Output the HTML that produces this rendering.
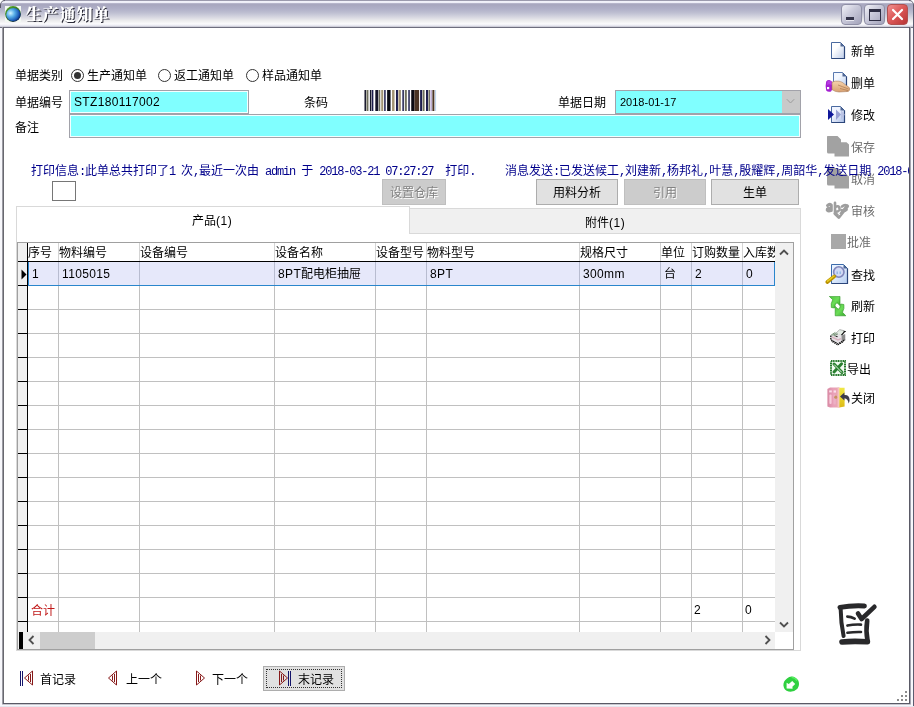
<!DOCTYPE html>
<html lang="zh-CN"><head><meta charset="utf-8"><title>生产通知单</title>
<style>
*{box-sizing:border-box;margin:0;padding:0}
html,body{width:914px;height:707px;overflow:hidden;background:#fff}
body{position:relative;font-family:"Liberation Sans","Noto Sans CJK SC",sans-serif;font-size:12px;line-height:12px;color:#000}
.a{position:absolute}
.t{position:absolute;white-space:nowrap;font-size:12px;line-height:14px;height:14px}
.m{font-family:"Liberation Mono","Noto Sans CJK SC",monospace;font-size:12px;letter-spacing:-1.2px}
.blue{color:#00008b}
.inp{position:absolute;border:1px solid #a2a2aa;background:#80ffff;box-shadow:inset 0 0 0 1px #f4ffff}
.btn{position:absolute;border:1px solid #adadad;background:#e1e1e1;text-align:center;font-size:12px}
.btn.dis{background:#cccccc;border-color:#bfbfbf;color:#838383;text-shadow:1px 1px 0 #fff}
.vl{position:absolute;width:1px;background:#c0c0c0}
.hl{position:absolute;height:1px;background:#c0c0c0}
.tb{position:absolute;white-space:nowrap;font-size:12px;line-height:14px;height:14px}
.tb.dis{color:#6d6d6d}
</style></head>
<body>
<div id="root" style="position:absolute;left:0;top:0;width:914px;height:707px;will-change:transform">
<div class="a" id="frame" style="left:0;top:0;width:914px;height:707px;background:#f7f7fb;border-radius:5px 5px 0 0;overflow:hidden">
<div class="a" id="title" style="left:0;top:0;width:914px;height:28px;background:linear-gradient(to bottom,#9b9aad 0px,#9b9aad 1px,#f2f2fa 1px,#ececf6 3px,#c4c3d6 3px,#a8a7bf 4px,#a8a7bf 5px,#b0b0c8 9px,#bfc0d2 13px,#d6d6e0 17px,#eeeeee 21px,#fbfbfd 24px,#e8e8f0 25.5px,#c0c0cc 27px,#6e6e7e 27px,#6e6e7e 28px)"></div>
<div class="a" style="left:2px;top:27px;width:1px;height:677px;background:#9c9ca4"></div>
<div class="a" style="left:3px;top:27px;width:1px;height:677px;background:#68686f"></div>
<div class="a" style="left:909px;top:27px;width:1px;height:677px;background:#5a5a66"></div>
<div class="a" style="left:910px;top:27px;width:1px;height:677px;background:#a4a4b0"></div>
<div class="a" style="left:913px;top:5px;width:1px;height:702px;background:#5c5c70"></div>
<svg class="a" style="left:0;top:0" width="914" height="8" viewBox="0 0 914 8"><path d="M0.5 8 V5 Q0.5 0.5 5 0.5" fill="none" stroke="#5a5a68" stroke-width="1"/><path d="M909 0.5 Q913.5 0.5 913.5 5" fill="none" stroke="#5a5a68" stroke-width="1"/></svg>
<div class="a" style="left:3px;top:703px;width:907px;height:1px;background:#5a5a66"></div>
<div class="a" style="left:0;top:706px;width:914px;height:1px;background:#e6e6ee"></div>
<div class="a" style="left:2px;top:704px;width:909px;height:1px;background:#c8c8d0"></div>
<div class="a" id="client" style="left:4px;top:28px;width:905px;height:675px;background:#fff"></div>
</div>
<svg class="a" style="left:5px;top:6px" width="16" height="16" viewBox="0 0 16 16"><defs><radialGradient id="gl" cx="30%" cy="38%" r="72%"><stop offset="0" stop-color="#d2f4ff"/><stop offset="0.4" stop-color="#58aee8"/><stop offset="0.8" stop-color="#1c5cb8"/><stop offset="1" stop-color="#0c2a6a"/></radialGradient><linearGradient id="ge" x1="0" y1="0" x2="0.6" y2="1"><stop offset="0" stop-color="#5cae22"/><stop offset="0.6" stop-color="#2c6c28"/><stop offset="1" stop-color="#10283c"/></linearGradient></defs><rect width="16" height="16" fill="#f2f8f2"/><circle cx="8" cy="8" r="7.9" fill="url(#ge)"/><ellipse cx="8.4" cy="8.7" rx="7.2" ry="6.6" fill="url(#gl)"/></svg>
<div class="a" style="left:26px;top:5px;font-family:'Liberation Serif','Noto Serif CJK SC',serif;font-weight:900;font-size:16px;letter-spacing:0.8px;line-height:20px;color:#fff;text-shadow:1px 1px 0 #2c2c38;white-space:nowrap">生产通知单</div>
<div class="a" style="left:841px;top:4px;width:21px;height:21px;border-radius:4px;border:1px solid #8f8fa6;background:linear-gradient(135deg,#f2f2f8 0%,#c9c9da 45%,#a3a3ba 100%)"><div class="a" style="left:4px;top:12px;width:8px;height:3px;background:#34344a;box-shadow:0 1px 0 #e8e8f0"></div></div>
<div class="a" style="left:864px;top:4px;width:21px;height:21px;border-radius:4px;border:1px solid #8f8fa6;background:linear-gradient(135deg,#f2f2f8 0%,#c9c9da 45%,#a3a3ba 100%)"><div class="a" style="left:4px;top:4px;width:12px;height:12px;border:1px solid #2e2e44;border-top-width:3px"></div></div>
<div class="a" style="left:887px;top:4px;width:21px;height:21px;border-radius:4px;border:1px solid #b05050;background:linear-gradient(135deg,#f09090 0%,#dd5a5a 45%,#b83434 100%)"><svg class="a" style="left:3px;top:3px" width="13" height="13" viewBox="0 0 13 13"><path d="M2 2 L11 11 M11 2 L2 11" stroke="#fff" stroke-width="2.2" stroke-linecap="round"/></svg></div>
<div class="t " style="left:15px;top:69px;">单据类别</div>
<div class="t " style="left:15px;top:96px;">单据编号</div>
<div class="t " style="left:15px;top:121px;">备注</div>
<div class="a" style="left:71px;top:69px;width:13px;height:13px;border:1px solid #333;border-radius:50%;background:#fff"><div class="a" style="left:2px;top:2px;width:7px;height:7px;border-radius:50%;background:#333"></div></div>
<div class="t " style="left:87px;top:69px;">生产通知单</div>
<div class="a" style="left:158px;top:69px;width:13px;height:13px;border:1px solid #333;border-radius:50%;background:#fff"></div>
<div class="t " style="left:174px;top:69px;">返工通知单</div>
<div class="a" style="left:246px;top:69px;width:13px;height:13px;border:1px solid #333;border-radius:50%;background:#fff"></div>
<div class="t " style="left:262px;top:69px;">样品通知单</div>
<div class="inp" style="left:69px;top:90px;width:180px;height:24px"></div>
<div class="t " style="left:74px;top:95px;letter-spacing:0.36px">STZ180117002</div>
<div class="t " style="left:304px;top:96px;">条码</div>
<svg class="a" style="left:364px;top:90px" width="73" height="21" viewBox="0 0 73 21"><rect x="0.49" y="0" width="1.48" height="21" fill="#15152a"/><rect x="2.46" y="0" width="1.97" height="21" fill="#6e6e5c"/><rect x="5.90" y="0" width="1.48" height="21" fill="#15152a"/><rect x="7.87" y="0" width="1.48" height="21" fill="#1c1c4c"/><rect x="11.32" y="0" width="2.95" height="21" fill="#15152a"/><rect x="14.76" y="0" width="1.48" height="21" fill="#6e6e5c"/><rect x="17.22" y="0" width="1.97" height="21" fill="#a39474"/><rect x="20.18" y="0" width="1.48" height="21" fill="#1c1c4c"/><rect x="23.13" y="0" width="3.44" height="21" fill="#0a0a12"/><rect x="28.05" y="0" width="2.46" height="21" fill="#a39474"/><rect x="31.99" y="0" width="1.97" height="21" fill="#1c1c4c"/><rect x="34.45" y="0" width="2.46" height="21" fill="#a39474"/><rect x="38.38" y="0" width="1.48" height="21" fill="#1c1c4c"/><rect x="40.84" y="0" width="1.97" height="21" fill="#6e6e5c"/><rect x="44.29" y="0" width="1.48" height="21" fill="#1c1c4c"/><rect x="47.24" y="0" width="3.15" height="21" fill="#0a0a12"/><rect x="50.39" y="0" width="4.72" height="21" fill="#4a3424"/><rect x="56.10" y="0" width="1.97" height="21" fill="#1c1c4c"/><rect x="58.56" y="0" width="1.97" height="21" fill="#6e6e5c"/><rect x="62.01" y="0" width="1.97" height="21" fill="#1c1c4c"/><rect x="64.47" y="0" width="1.48" height="21" fill="#6e6e5c"/><rect x="66.44" y="0" width="1.48" height="21" fill="#b8a8d0"/><rect x="68.40" y="0" width="1.97" height="21" fill="#4a3424"/><rect x="71.36" y="0" width="0.69" height="21" fill="#9cc0e8"/></svg>
<div class="t " style="left:558px;top:96px;">单据日期</div>
<div class="inp" style="left:615px;top:90px;width:186px;height:24px;box-shadow:none"><div class="a" style="right:0;top:0;width:18px;height:22px;background:#c9c9c9"><svg class="a" style="left:4px;top:7px" width="9" height="7" viewBox="0 0 9 7"><path d="M0.8 1.2 L4.5 5 L8.2 1.2" fill="none" stroke="#9c9c9c" stroke-width="1"/></svg></div></div>
<div class="t " style="left:620px;top:95px;font-size:11px">2018-01-17</div>
<div class="inp" style="left:69px;top:114px;width:732px;height:24px"></div>
<div class="t blue" style="left:31px;top:164px;">打印信息<span class="m">:</span>此单总共打印了<span class="m">1&nbsp;</span>次<span class="m">,</span>最近一次由<span class="m">&nbsp;admin&nbsp;</span>于<span class="m">&nbsp;2018-03-21&nbsp;07:27:27&nbsp;&nbsp;</span>打印<span class="m">.</span></div>
<div class="a" style="left:52px;top:181px;width:24px;height:20px;border:1px solid #767676;background:#fff"></div>
<div class="btn dis" style="left:382px;top:179px;width:64px;height:26px;line-height:27px">设置仓库</div>
<div class="btn" style="left:536px;top:179px;width:82px;height:26px;line-height:27px">用料分析</div>
<div class="btn dis" style="left:624px;top:179px;width:82px;height:26px;line-height:27px">引用</div>
<div class="btn" style="left:711px;top:179px;width:88px;height:26px;line-height:27px">生单</div>
<div class="a" style="left:409px;top:208px;width:392px;height:26px;background:#f0f0f0;border:1px solid #d9d9d9"></div>
<div class="a" style="left:16px;top:233px;width:785px;height:418px;background:#fff;border:1px solid #d9d9d9"></div>
<div class="a" style="left:16px;top:206px;width:394px;height:28px;background:#fff;border:1px solid #d9d9d9;border-bottom:none"></div>
<div class="t " style="left:192px;top:214px;">产品<span style="letter-spacing:0.5px">(1)</span></div>
<div class="t " style="left:585px;top:216px;">附件<span style="letter-spacing:0.5px">(1)</span></div>
<div class="a" id="grid" style="left:17px;top:242px;width:777px;height:408px;border:1px solid #a0a0a0;background:#fff;overflow:hidden"></div>
<div class="a" style="left:18px;top:243px;width:9px;height:389px;background:#f0f0f0"></div>
<div class="vl" style="left:58px;top:243px;height:18px;background:#d4d4d4"></div><div class="vl" style="left:58px;top:262px;height:370px"></div>
<div class="vl" style="left:139px;top:243px;height:18px;background:#d4d4d4"></div><div class="vl" style="left:139px;top:262px;height:370px"></div>
<div class="vl" style="left:274px;top:243px;height:18px;background:#d4d4d4"></div><div class="vl" style="left:274px;top:262px;height:370px"></div>
<div class="vl" style="left:375px;top:243px;height:18px;background:#d4d4d4"></div><div class="vl" style="left:375px;top:262px;height:370px"></div>
<div class="vl" style="left:426px;top:243px;height:18px;background:#d4d4d4"></div><div class="vl" style="left:426px;top:262px;height:370px"></div>
<div class="vl" style="left:579px;top:243px;height:18px;background:#d4d4d4"></div><div class="vl" style="left:579px;top:262px;height:370px"></div>
<div class="vl" style="left:660px;top:243px;height:18px;background:#d4d4d4"></div><div class="vl" style="left:660px;top:262px;height:370px"></div>
<div class="vl" style="left:691px;top:243px;height:18px;background:#d4d4d4"></div><div class="vl" style="left:691px;top:262px;height:370px"></div>
<div class="vl" style="left:742px;top:243px;height:18px;background:#d4d4d4"></div><div class="vl" style="left:742px;top:262px;height:370px"></div>
<div class="hl" style="left:28px;top:285px;width:747px"></div><div class="a" style="left:18px;top:285px;width:10px;height:1px;background:#000"></div>
<div class="hl" style="left:28px;top:309px;width:747px"></div><div class="a" style="left:18px;top:309px;width:10px;height:1px;background:#000"></div>
<div class="hl" style="left:28px;top:333px;width:747px"></div><div class="a" style="left:18px;top:333px;width:10px;height:1px;background:#000"></div>
<div class="hl" style="left:28px;top:357px;width:747px"></div><div class="a" style="left:18px;top:357px;width:10px;height:1px;background:#000"></div>
<div class="hl" style="left:28px;top:381px;width:747px"></div><div class="a" style="left:18px;top:381px;width:10px;height:1px;background:#000"></div>
<div class="hl" style="left:28px;top:405px;width:747px"></div><div class="a" style="left:18px;top:405px;width:10px;height:1px;background:#000"></div>
<div class="hl" style="left:28px;top:429px;width:747px"></div><div class="a" style="left:18px;top:429px;width:10px;height:1px;background:#000"></div>
<div class="hl" style="left:28px;top:453px;width:747px"></div><div class="a" style="left:18px;top:453px;width:10px;height:1px;background:#000"></div>
<div class="hl" style="left:28px;top:477px;width:747px"></div><div class="a" style="left:18px;top:477px;width:10px;height:1px;background:#000"></div>
<div class="hl" style="left:28px;top:501px;width:747px"></div><div class="a" style="left:18px;top:501px;width:10px;height:1px;background:#000"></div>
<div class="hl" style="left:28px;top:525px;width:747px"></div><div class="a" style="left:18px;top:525px;width:10px;height:1px;background:#000"></div>
<div class="hl" style="left:28px;top:549px;width:747px"></div><div class="a" style="left:18px;top:549px;width:10px;height:1px;background:#000"></div>
<div class="hl" style="left:28px;top:573px;width:747px"></div><div class="a" style="left:18px;top:573px;width:10px;height:1px;background:#000"></div>
<div class="hl" style="left:28px;top:597px;width:747px"></div><div class="a" style="left:18px;top:597px;width:10px;height:1px;background:#000"></div>
<div class="hl" style="left:28px;top:621px;width:747px"></div><div class="a" style="left:18px;top:621px;width:10px;height:1px;background:#000"></div>
<div class="a" style="left:28px;top:262px;width:747px;height:24px;background:#e6e8fa;border:1px solid #2a86cc;border-top:none"></div>
<div class="vl" style="left:58px;top:262px;height:23px;background:#b8bcd0"></div><div class="vl" style="left:139px;top:262px;height:23px;background:#b8bcd0"></div><div class="vl" style="left:274px;top:262px;height:23px;background:#b8bcd0"></div><div class="vl" style="left:375px;top:262px;height:23px;background:#b8bcd0"></div><div class="vl" style="left:426px;top:262px;height:23px;background:#b8bcd0"></div><div class="vl" style="left:579px;top:262px;height:23px;background:#b8bcd0"></div><div class="vl" style="left:660px;top:262px;height:23px;background:#b8bcd0"></div><div class="vl" style="left:691px;top:262px;height:23px;background:#b8bcd0"></div><div class="vl" style="left:742px;top:262px;height:23px;background:#b8bcd0"></div>
<div class="a" style="left:27px;top:243px;width:1px;height:389px;background:#000"></div>
<div class="a" style="left:18px;top:261px;width:757px;height:1px;background:#000"></div>
<svg class="a" style="left:21px;top:269px" width="6" height="11" viewBox="0 0 6 11"><path d="M0.5 0.5 L5.5 5.5 L0.5 10.5 Z" fill="#000"/></svg>
<div class="t " style="left:28px;top:246px;">序号</div>
<div class="t " style="left:59px;top:246px;">物料编号</div>
<div class="t " style="left:140px;top:246px;">设备编号</div>
<div class="t " style="left:275px;top:246px;">设备名称</div>
<div class="t " style="left:376px;top:246px;">设备型号</div>
<div class="t " style="left:427px;top:246px;">物料型号</div>
<div class="t " style="left:580px;top:246px;">规格尺寸</div>
<div class="t " style="left:661px;top:246px;">单位</div>
<div class="t " style="left:692px;top:246px;">订购数量</div>
<div class="t" style="left:743px;top:246px;width:32px;overflow:hidden">入库数量</div>
<div class="t " style="left:32px;top:267px;letter-spacing:0.35px">1</div>
<div class="t " style="left:62px;top:267px;letter-spacing:0.35px">1105015</div>
<div class="t " style="left:278px;top:267px;"><span style="letter-spacing:0.35px">8PT</span>配电柜抽屉</div>
<div class="t " style="left:430px;top:267px;letter-spacing:0.35px">8PT</div>
<div class="t " style="left:583px;top:267px;letter-spacing:0.35px">300mm</div>
<div class="t " style="left:664px;top:267px;letter-spacing:0.35px">台</div>
<div class="t " style="left:695px;top:267px;letter-spacing:0.35px">2</div>
<div class="t " style="left:746px;top:267px;letter-spacing:0.35px">0</div>
<div class="t " style="left:31px;top:604px;color:#c01818">合计</div>
<div class="t " style="left:694px;top:603px;">2</div>
<div class="t " style="left:745px;top:603px;">0</div>
<div class="a" style="left:775px;top:243px;width:18px;height:389px;background:#f0f0f0"></div>
<div class="a" style="left:18px;top:632px;width:757px;height:17px;background:#f0f0f0"></div>
<div class="a" style="left:19px;top:632px;width:4px;height:17px;background:#000"></div>
<div class="a" style="left:40px;top:632px;width:55px;height:17px;background:#cdcdcd"></div>
<svg class="a" style="left:778.5px;top:248px" width="10" height="8" viewBox="0 0 10 8"><path d="M1 6.5 L5 2.5 L9 6.5" fill="none" stroke="#505050" stroke-width="1.8"/></svg>
<svg class="a" style="left:778.5px;top:621px" width="10" height="8" viewBox="0 0 10 8"><path d="M1 1.5 L5 5.5 L9 1.5" fill="none" stroke="#505050" stroke-width="1.8"/></svg>
<svg class="a" style="left:27px;top:635px" width="8" height="10" viewBox="0 0 8 10"><path d="M6.5 1 L2.5 5 L6.5 9" fill="none" stroke="#505050" stroke-width="1.8"/></svg>
<svg class="a" style="left:764px;top:635px" width="8" height="10" viewBox="0 0 8 10"><path d="M1.5 1 L5.5 5 L1.5 9" fill="none" stroke="#505050" stroke-width="1.8"/></svg>
<svg class="a" style="left:20px;top:670px" width="14" height="16" viewBox="0 0 14 16"><path d="M0.5 1 V16" stroke="#14146a" stroke-width="1"/><path d="M2.5 1 V16" stroke="#14146a" stroke-width="1"/><path d="M12.5 1 L4.5 8 L12.5 15 Z M10.5 4 V12 M8.5 5.5 V10.5" fill="none" stroke="#861818" stroke-width="1"/></svg>
<div class="t " style="left:40px;top:673px;">首记录</div>
<svg class="a" style="left:108px;top:670px" width="14" height="16" viewBox="0 0 14 16"><path d="M8.5 1 L0.5 8 L8.5 15 Z M6.5 4 V12 M4.5 5.5 V10.5" fill="none" stroke="#861818" stroke-width="1"/></svg>
<div class="t " style="left:126px;top:673px;">上一个</div>
<svg class="a" style="left:196px;top:670px" width="14" height="16" viewBox="0 0 14 16"><path d="M0.5 1 L8.5 8 L0.5 15 Z M2.5 4 V12 M4.5 5.5 V10.5" fill="none" stroke="#861818" stroke-width="1"/></svg>
<div class="t " style="left:212px;top:673px;">下一个</div>
<div class="a" style="left:263px;top:666px;width:82px;height:25px;background:#e1e1e1;border:1px solid #adadad"><div class="a" style="left:2px;top:2px;width:76px;height:19px;border:1px dotted #333"></div></div>
<svg class="a" style="left:279px;top:670px" width="14" height="16" viewBox="0 0 14 16"><path d="M0.5 1 L8.5 8 L0.5 15 Z M2.5 4 V12 M4.5 5.5 V10.5" fill="none" stroke="#861818" stroke-width="1"/><path d="M9.5 1 V16" stroke="#14146a" stroke-width="1"/><path d="M11.5 1 V16" stroke="#14146a" stroke-width="1"/></svg>
<div class="t " style="left:298px;top:673px;">末记录</div>
<svg class="a" style="left:829px;top:40px" width="20" height="22" viewBox="0 0 20 22"><defs><linearGradient id="g1" x1="0" y1="0" x2="1" y2="1"><stop offset="0" stop-color="#ffffff"/><stop offset="0.35" stop-color="#ffffff"/><stop offset="1" stop-color="#bccbe8"/></linearGradient></defs><path d="M2.5 2.5 H11.5 L15.5 6.5 V18.5 H2.5 Z" fill="url(#g1)" stroke="#4a6aa0" stroke-width="1"/><path d="M11.5 2.5 V6.5 H15.5 Z" fill="#2c467a" opacity="0.8"/><path d="M2.5 18.5 H15.5 V6.5" fill="none" stroke="#2c467a" stroke-width="1.2"/></svg>
<svg class="a" style="left:825px;top:71px" width="26" height="23" viewBox="0 0 26 23"><defs><linearGradient id="g2" x1="0" y1="0" x2="1" y2="1"><stop offset="0" stop-color="#f4f8ff"/><stop offset="0.35" stop-color="#f4f8ff"/><stop offset="1" stop-color="#bcd0f0"/></linearGradient><linearGradient id="hd" x1="0" y1="0" x2="0" y2="1"><stop offset="0" stop-color="#f6d4ae"/><stop offset="1" stop-color="#d8a070"/></linearGradient></defs><path d="M8.5 1.5 H17.5 L21.5 5.5 V15.5 H8.5 Z" fill="url(#g2)" stroke="#5a7ab0" stroke-width="1"/><path d="M17.5 1.5 V5.5 H21.5 Z" fill="#2c467a" opacity="0.8"/><path d="M8.5 15.5 H21.5 V5.5" fill="none" stroke="#2c467a" stroke-width="1.2"/><path d="M1.2 10.5 Q0.2 14 1.2 19.5 Q3 21.5 6 20.5 L7.5 18 L7.5 11 L5 9.2 Q2.5 8.8 1.2 10.5 Z" fill="#a41fd2"/><path d="M2.5 10 Q5 9.3 7 11 L7 14 Q4 12.5 2 14 Z" fill="#c04ae8" opacity="0.7"/><rect x="2" y="16" width="2.2" height="2.2" fill="#fff"/><path d="M7 11.2 Q10 9.6 14 10.2 Q17.5 10.8 19.5 13 L24.3 16.6 Q25.2 18 24.4 19.4 Q23.6 20.8 21 20.6 L14 21 Q10 21 7 18.6 Z" fill="url(#hd)" stroke="#9a6a48" stroke-width="0.5"/><path d="M13 14 Q17 15.5 23.5 18 M15 17.5 Q19 18.5 23 19.6" fill="none" stroke="#a87850" stroke-width="0.7"/></svg>
<svg class="a" style="left:827px;top:105px" width="20" height="20" viewBox="0 0 20 20"><defs><linearGradient id="g3" x1="0" y1="0" x2="1" y2="1"><stop offset="0" stop-color="#f0f4ff"/><stop offset="0.35" stop-color="#f0f4ff"/><stop offset="1" stop-color="#a8bce4"/></linearGradient></defs><path d="M4.5 1.5 H13.5 L17.5 5.5 V17.5 H4.5 Z" fill="url(#g3)" stroke="#4a6aa0" stroke-width="1"/><path d="M13.5 1.5 V5.5 H17.5 Z" fill="#2c467a" opacity="0.8"/><path d="M4.5 17.5 H17.5 V5.5" fill="none" stroke="#2c467a" stroke-width="1.2"/><path d="M9 4.5 L14 9.5 L9 15 Z" fill="#8c94cc" opacity="0.85"/><path d="M14 5 L18 9.5 L14 14.5 Z" fill="#b4bce0" opacity="0.7"/><path d="M1 4 L7 9.5 L1 15 Z" fill="#10189a"/></svg>
<svg class="a" style="left:827px;top:136px" width="22" height="21" viewBox="0 0 22 21"><path d="M0 0.6 Q0 0 0.8 0 H10.5 L14 3.6 V6.2 H19.5 L22 8.6 V20.5 H7.5 V17.6 H1.6 Q0 17.6 0 16 Z" fill="#a2a2a2"/></svg>
<svg class="a" style="left:827px;top:168px" width="22" height="21" viewBox="0 0 22 21"><path d="M0 0.6 Q0 0 0.8 0 H10.5 L14 3.6 V6.2 H19.5 L22 8.6 V20.5 H7.5 V17.6 H1.6 Q0 17.6 0 16 Z" fill="#a2a2a2"/></svg>
<svg class="a" style="left:825px;top:201px" width="26" height="20" viewBox="0 0 26 20"><g fill="none" stroke="#9e9e9e" stroke-linecap="round" stroke-linejoin="round"><path d="M2.5 4.5 Q4.5 2.5 6.3 4.2 V9.5 M6.3 7 Q2 6.6 2.2 9 Q3.2 11 6.3 9.3" stroke-width="3"/><path d="M10 1.8 V11 M10.5 6 Q13.5 4 14.5 7 Q14.6 10.6 10.6 10.6" stroke-width="2.6"/><path d="M10.2 12.5 L13.8 16 L22.3 5.2" stroke-width="3.6"/><path d="M17 5.5 Q19.5 3.5 21.5 4.5 M16.5 9.2 Q19 10.6 21.5 8.6" stroke-width="2.8"/></g><path d="M12.6 7.2 L11.8 9.6 L13.6 8.6 Z M14.4 12.2 L13.2 14.4 L15.4 13.4 Z" fill="#fff"/></svg>
<svg class="a" style="left:831px;top:234px" width="15" height="15" viewBox="0 0 15 15"><rect width="15" height="15" fill="#a8a8a8"/></svg>
<svg class="a" style="left:825px;top:263px" width="25" height="23" viewBox="0 0 25 23"><defs><linearGradient id="g4" x1="0" y1="0" x2="1" y2="1"><stop offset="0" stop-color="#e8f2ff"/><stop offset="0.35" stop-color="#e8f2ff"/><stop offset="1" stop-color="#b4ccf0"/></linearGradient><radialGradient id="ln"><stop offset="0" stop-color="#f4f6ff"/><stop offset="1" stop-color="#c4c8ec"/></radialGradient></defs><path d="M6.5 1.5 H18.5 L22.5 5.5 V20.5 H6.5 Z" fill="url(#g4)" stroke="#3c6cac" stroke-width="1"/><path d="M18.5 1.5 V5.5 H22.5 Z" fill="#2c467a" opacity="0.8"/><path d="M6.5 20.5 H22.5 V5.5" fill="none" stroke="#2c467a" stroke-width="1.2"/><circle cx="13.8" cy="9" r="5.2" fill="url(#ln)" stroke="#8088bc" stroke-width="1.6"/><circle cx="13.8" cy="9" r="3" fill="#c8d8f4" opacity="0.8"/><path d="M12.2 8.5 V11 M15.2 8.5 V11" stroke="#88b0e0" stroke-width="1.2"/><path d="M9.3 13.3 L2.3 19" stroke="#b89000" stroke-width="3.6" stroke-linecap="round"/><path d="M9 13 L2.6 18.2" stroke="#e8cc20" stroke-width="1.6" stroke-linecap="round"/></svg>
<svg class="a" style="left:829px;top:296px" width="18" height="21" viewBox="0 0 18 21"><defs><linearGradient id="gr" x1="0" y1="0" x2="1" y2="1"><stop offset="0" stop-color="#4cc63c"/><stop offset="0.5" stop-color="#6cdc58"/><stop offset="1" stop-color="#34a828"/></linearGradient></defs><path d="M0.3 0.4 H11 V9.6 L7.9 6.7 Q5.8 8 5.5 12 L2.3 11.5 Q1.5 7.5 3.7 3.7 Z" fill="url(#gr)" stroke="#2c9422" stroke-width="0.6"/><path d="M16.8 19.8 H6.2 V10.4 L9.3 13.3 Q11.4 12 11.7 8 L14.9 8.5 Q15.7 12.5 13.5 16.3 Z" fill="url(#gr)" stroke="#2c9422" stroke-width="0.6"/></svg>
<svg class="a" style="left:830px;top:329px" width="17" height="17" viewBox="0 0 17 17"><path d="M5.2 5 L9.6 0.6 L13.6 1.6 L14.6 2.4 L11.2 6.6 Z" fill="#e4ece4" stroke="#8a8a8a" stroke-width="0.6"/><path d="M11.3 6.4 L14.8 2.3" stroke="#111" stroke-width="1.1"/><path d="M13.6 2.2 L15.8 2.6" stroke="#111" stroke-width="1"/><path d="M1 6.2 L5 3.6 L11.6 6.4 L14.6 5.2 L15.4 6 V10.4 L8.2 15 L0.8 11 Z" fill="#e6e2e6"/><path d="M1.2 6 L5.4 3.4 M2.6 6.4 L6.6 4.2 M4 7 L8 4.8" stroke="#3c6c3c" stroke-width="0.7"/><path d="M11.6 6.6 L15.2 5 V10.4 L11.6 12.6 Z" fill="#8c8c8c"/><path d="M0.8 6.6 V10.8 L8 15 L15.2 10.6" fill="none" stroke="#111" stroke-width="1.3" stroke-dasharray="1.6 0.7"/><path d="M1.6 12.4 L7.8 16 L13.6 12.6" fill="none" stroke="#111" stroke-width="1" stroke-dasharray="1.6 0.8"/><path d="M2 8 L8 11 L11 9.6" fill="none" stroke="#d8b4c0" stroke-width="1.4"/><path d="M5.6 7.2 L7.6 7.8" stroke="#222" stroke-width="1.1"/></svg>
<svg class="a" style="left:830px;top:360px" width="16" height="16" viewBox="0 0 16 16"><rect x="1" y="1" width="14" height="14" fill="#f2fbf2" stroke="#24782a" stroke-width="2" stroke-dasharray="1.2 0.5"/><path d="M4 4 L12 12.4 M11.6 3.8 L4 12" stroke="#2a8030" stroke-width="3" stroke-linecap="round"/><path d="M4.2 4.6 L11.8 12.4" stroke="#f4fff4" stroke-width="0.9"/></svg>
<svg class="a" style="left:827px;top:387px" width="24" height="21" viewBox="0 0 24 21"><defs><linearGradient id="pk" x1="0" y1="0" x2="1" y2="0"><stop offset="0" stop-color="#d88aa4"/><stop offset="0.5" stop-color="#eaa0b8"/><stop offset="1" stop-color="#e8a8b0"/></linearGradient><linearGradient id="yl" x1="0" y1="0" x2="0" y2="1"><stop offset="0" stop-color="#f0e848"/><stop offset="0.5" stop-color="#e8d428"/><stop offset="1" stop-color="#dcb818"/></linearGradient></defs><path d="M0.4 2 L3 0.4 H12.4 V20.6 H3 L0.4 19.4 Z" fill="url(#pk)"/><rect x="2.2" y="3.4" width="2.6" height="2" fill="#fbdde8"/><rect x="2.4" y="7.4" width="2.2" height="9.6" rx="1" fill="#f8ccdc"/><rect x="6.6" y="3.4" width="2.4" height="2.2" fill="#fbdde8"/><rect x="6.4" y="7.4" width="2.4" height="10" rx="1" fill="#ecb0c4"/><circle cx="8.8" cy="10.2" r="1.6" fill="#c89060"/><rect x="10.6" y="0.4" width="1.8" height="20.2" fill="#f4c4c0"/><path d="M12.4 0.8 H17.6 V19.6 L12.4 20.6 Z" fill="url(#yl)"/><path d="M13 9.4 L17.4 5.6 L17.4 8 Q22.4 7.6 22.6 13 Q22.6 15 21.6 16.4 Q21 11.4 17.4 11.2 L17.4 13.4 Z" fill="#3c3c4c"/></svg>
<div class="tb" style="left:851px;top:45px">新单</div>
<div class="tb" style="left:851px;top:77px">删单</div>
<div class="tb" style="left:851px;top:109px">修改</div>
<div class="tb dis" style="left:851px;top:141px">保存</div>
<div class="tb dis" style="left:851px;top:173px">取消</div>
<div class="tb dis" style="left:851px;top:205px">审核</div>
<div class="tb dis" style="left:847px;top:236px">批准</div>
<div class="tb" style="left:851px;top:269px">查找</div>
<div class="tb" style="left:851px;top:300px">刷新</div>
<div class="tb" style="left:851px;top:332px">打印</div>
<div class="tb" style="left:847px;top:363px">导出</div>
<div class="tb" style="left:851px;top:392px">关闭</div>
<div class="t blue" style="left:505px;top:164px;width:404px;overflow:hidden">消息发送<span class="m">:</span>已发送候工<span class="m">,</span>刘建新<span class="m">,</span>杨邦礼<span class="m">,</span>叶慧<span class="m">,</span>殷耀辉<span class="m">,</span>周韶华<span class="m">,</span>发送日期<span class="m">&nbsp;2018-03-21</span></div>
<svg class="a" style="left:837px;top:603px" width="42" height="44" viewBox="0 0 42 44"><g fill="none" stroke="#29292b" stroke-linecap="round" stroke-linejoin="round"><path d="M3 4.4 Q14 2.4 27.4 3" stroke-width="5"/><path d="M3.6 5 Q3.8 20 6.6 33" stroke-width="4"/><path d="M5 39 Q16 37.8 30.4 38.8" stroke-width="5.6"/><path d="M30.2 17.6 Q28.6 28 30.6 38" stroke-width="4.6"/><path d="M21 10.4 L24.6 16 L37.4 3.8" stroke-width="4.6"/><path d="M10.4 13.6 Q14 13.6 17.6 15.6" stroke-width="2.8"/><path d="M10.4 22.6 Q17 21.2 24 21.6" stroke-width="2.6"/><path d="M10.4 29.8 Q17 28.8 24 29" stroke-width="2.6"/></g></svg>
<svg class="a" style="left:783px;top:676px" width="17" height="17" viewBox="0 0 17 17"><path d="M8.6 0.4 Q13 0.6 15.4 4.8 Q17 9 14.4 12.8 Q11 16.4 5.6 15.6 Q1 14.4 0.4 9.6 Q0.2 5 4 2.4 Q6 0.6 8.6 0.4 Z" fill="#2fd040"/><path d="M8.6 1.4 Q12 1.6 14 4.6" stroke="#58f060" stroke-width="1.4" fill="none"/><path d="M9.2 5 L12.2 8 L9.4 10.8 L9.6 12.8 L3.6 12.6 L3.6 6.8 L5.8 8 Z" fill="#fafffa"/></svg>
<svg class="a" style="left:897px;top:691px" width="10" height="10" viewBox="0 0 10 10"><rect x="8" y="0" width="2" height="2" fill="#8c8c8c"/><rect x="4" y="4" width="2" height="2" fill="#8c8c8c"/><rect x="8" y="4" width="2" height="2" fill="#8c8c8c"/><rect x="0" y="8" width="2" height="2" fill="#8c8c8c"/><rect x="4" y="8" width="2" height="2" fill="#8c8c8c"/><rect x="8" y="8" width="2" height="2" fill="#8c8c8c"/></svg>
</div>
</body></html>
